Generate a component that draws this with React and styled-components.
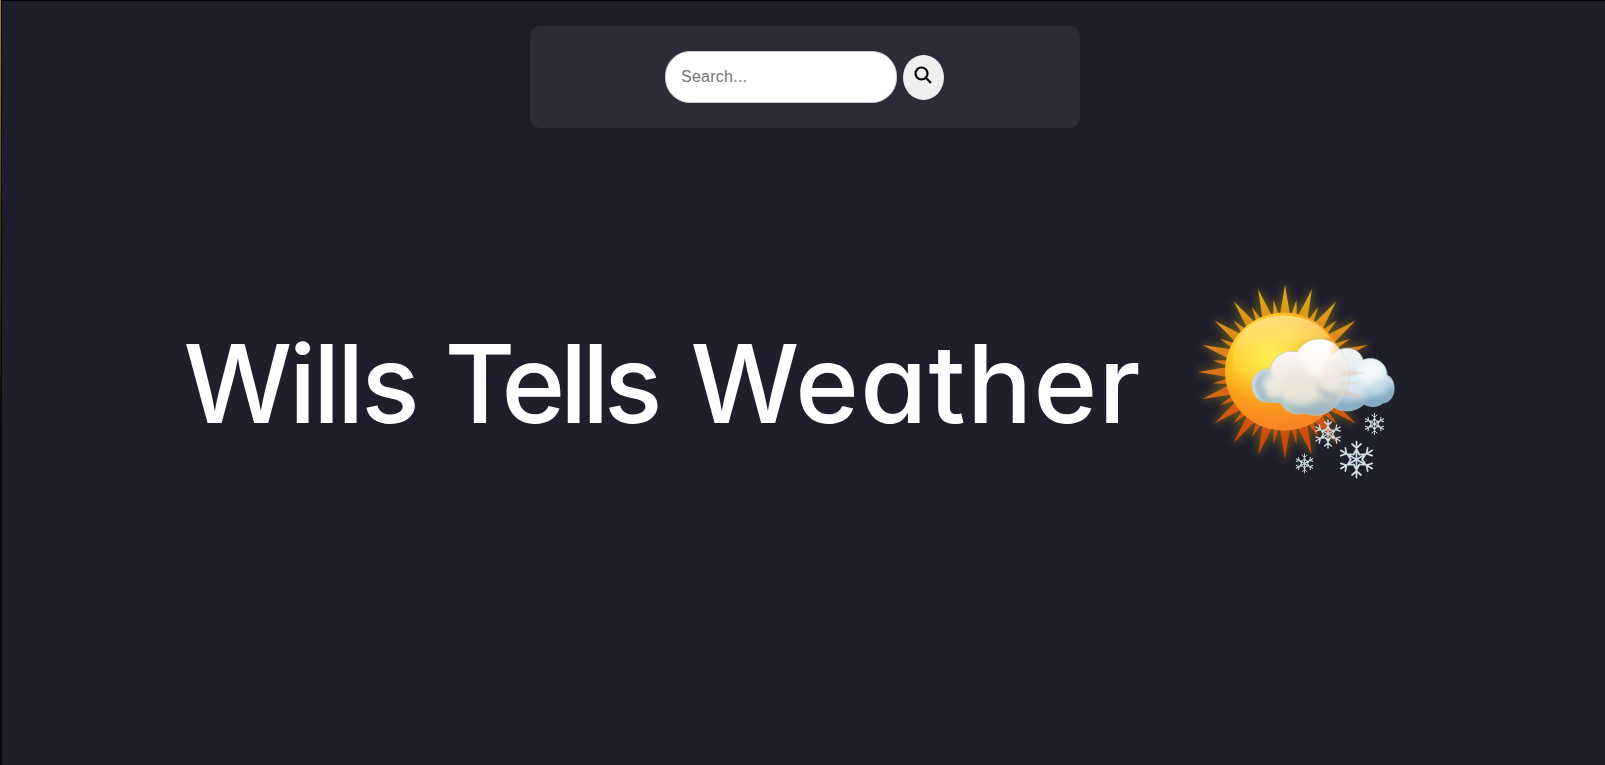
import React from 'react';
import styled, { createGlobalStyle } from 'styled-components';

const GlobalStyle = createGlobalStyle`
  * { box-sizing: border-box; }
  body { margin: 0; background: #1f1e2d; overflow: hidden; }
`;

const Page = styled.div`
  height: 765px;
  display: flex;
  flex-direction: column;
  align-items: center;
  padding-top: 25px;
  background: #1f1e2d;
  border-left: 2px solid #08070d;
  border-top: 1px solid #08070d;
  position: relative;
`;

const EdgeGlow = styled.div`
  position: absolute;
  left: -2px;
  top: -1px;
  width: 1px;
  height: 430px;
  background: linear-gradient(#a08800, #806c00 25%, #4a3d06 50%, #08070d);
`;

const SearchBar = styled.form`
  width: 550px;
  height: 102px;
  margin-left: 3px;
  display: flex;
  align-items: center;
  justify-content: center;
  gap: 6px;
  padding-right: 1px;
  background: #2c2b3a;
  border-radius: 10px;
  box-shadow: 0 0 10px rgba(0, 0, 0, 0.1);
`;

const SearchInput = styled.input`
  width: 232px;
  height: 52px;
  padding: 0 15px;
  border: 1px solid #ccc;
  border-radius: 25px;
  background: #fff;
  font: 16px "Liberation Sans", sans-serif;
  letter-spacing: 0.25px;
  outline: none;
  &::placeholder { color: #757575; }
`;

const SearchButton = styled.button`
  width: 41px;
  height: 45px;
  padding: 0 1px 4px 0;
  border: 0;
  border-radius: 50%;
  background: #efefef;
  display: flex;
  align-items: center;
  justify-content: center;
`;

const Hero = styled.main`
  width: 1220px;
  display: flex;
  align-items: flex-start;
  justify-content: space-between;
  margin: 146px 18px 0 0;
`;

const Title = styled.h1`
  margin: 40px 0 0 -1px;
  display: flex;
  color: #fff;
  font: 500 108.5px/140px Inter, sans-serif;
  font-feature-settings: "cv11" 1;
`;

const Word = styled.span`
  flex: none;
  width: ${p => p.$width}px;
  letter-spacing: ${p => p.$spacing}px;
  white-space: pre;
`;

const Picture = styled.svg`
  flex: none;
  display: block;
`;

const rays = Array.from({ length: 40 }, (_, i) => ({ angle: i * 9, long: i % 2 === 0 }));

function Ray({ angle, long }) {
  const a = (angle * Math.PI) / 180;
  const w = long ? 0.1 : 0.06;
  const tip = long ? 87 : 73;
  const pt = (r, t) => `${95 + r * Math.sin(t)},${98 - r * Math.cos(t)}`;
  return <polygon points={`${pt(55, a - w)} ${pt(tip, a)} ${pt(55, a + w)}`} />;
}

function Snowflake({ x, y, size }) {
  return (
    <g transform={`translate(${x} ${y}) scale(${size / 18})`} stroke="url(#snow)" strokeWidth="1.7" fill="none" strokeLinecap="round">
      {[0, 60, 120, 180, 240, 300].map(r => (
        <path key={r} transform={`rotate(${r})`} d="M0.01 0V-18M-4.500 -15.500L0-11.500L4.500-15.500M-2.900-5L0-10.500L2.900-5" />
      ))}
    </g>
  );
}

const FRONT = 'M80 128C68 129 62 121 62 111C62 101 70 94 80 95C83 82 95 75 107 78C112 69 120 65 130 65C142 65 151 73 154 83C164 91 160 121 146 131C140 140 125 144 115 139C104 142 94 137 91 129C88 128 85 129 80 128Z';
const BACK = 'M149 76C160 71 171 77 173 86C185 81 197 89 197 101C208 106 206 128 193 129C187 134 179 133 174 130C165 139 152 138 145 134C130 120 132 85 149 76Z';

function WeatherPicture() {
  return (
    <Picture width="215" height="215" viewBox="0 0 215 215" aria-label="Sun, cloud and snow">
      <defs>
        <linearGradient id="ray" gradientUnits="userSpaceOnUse" x1="0" y1="11" x2="0" y2="186">
          <stop stopColor="#d9ac1c" /><stop offset=".45" stopColor="#d9781b" /><stop offset="1" stopColor="#c93d08" />
        </linearGradient>
        <radialGradient id="sun" gradientUnits="userSpaceOnUse" cx="79" cy="81" r="78">
          <stop stopColor="#ffee4a" /><stop offset=".4" stopColor="#ffcf2e" /><stop offset=".7" stopColor="#f8a817" /><stop offset="1" stopColor="#f4881d" />
        </radialGradient>
        <linearGradient id="shine" x1="0" y1="0" x2="0" y2="1">
          <stop stopColor="#ffe9a0" stopOpacity=".6" /><stop offset="1" stopColor="#ffe94a" stopOpacity=".05" />
        </linearGradient>
        <linearGradient id="lower" x1="0" y1="0" x2="0" y2="1">
          <stop offset=".5" stopColor="#f8861d" stopOpacity="0" /><stop offset="1" stopColor="#fb8128" stopOpacity=".75" />
        </linearGradient>
        <linearGradient id="back" gradientUnits="userSpaceOnUse" x1="165" y1="75" x2="178" y2="136">
          <stop stopColor="#f5f5f3" /><stop offset=".45" stopColor="#d9e7ee" /><stop offset="1" stopColor="#8fb4ca" />
        </linearGradient>
        <linearGradient id="front" gradientUnits="userSpaceOnUse" x1="115" y1="68" x2="118" y2="141">
          <stop stopColor="#fffefa" /><stop offset=".4" stopColor="#f4ebe4" /><stop offset=".72" stopColor="#e4e2d4" /><stop offset="1" stopColor="#9fbbc5" />
        </linearGradient>
        <linearGradient id="fade" gradientUnits="userSpaceOnUse" x1="138" y1="0" x2="160" y2="0">
          <stop stopColor="#fff" /><stop offset="1" stopColor="#fff" stopOpacity=".3" />
        </linearGradient>
        <mask id="frontMask" maskUnits="userSpaceOnUse" x="55" y="55" width="120" height="95"><rect x="55" y="55" width="120" height="95" fill="url(#fade)" /></mask>
        <linearGradient id="snow" gradientUnits="userSpaceOnUse" x1="0" y1="-18" x2="0" y2="18">
          <stop stopColor="#dadde4" /><stop offset="1" stopColor="#b2def2" />
        </linearGradient>
        <filter id="glow" x="-20%" y="-20%" width="140%" height="140%"><feGaussianBlur stdDeviation="4" /></filter>
        <filter id="soft" x="-20%" y="-20%" width="140%" height="140%"><feGaussianBlur stdDeviation="2.5" /></filter>
        <filter id="edge"><feGaussianBlur stdDeviation=".7" /></filter>
        <clipPath id="frontClip"><path d={FRONT} /></clipPath>
        <clipPath id="backClip"><path d={BACK} /></clipPath>
      </defs>
      <g fill="#c3a000" stroke="#c3a000" strokeWidth="3" opacity=".4" filter="url(#glow)">
        {rays.map(r => <Ray key={r.angle} {...r} />)}
      </g>
      <g fill="url(#ray)">{rays.map(r => <Ray key={r.angle} {...r} />)}</g>
      <circle cx="94" cy="97.500" r="59" fill="url(#sun)" />
      <circle cx="94" cy="97.500" r="59" fill="url(#lower)" />
      <path d="M44 83C44 57 66 42 94 42C116 42 132 50 140 64C113 62 93 75 83 110C61 111 44 99 44 83Z" fill="url(#shine)" />
      <path d="M42 76C60 66 91 62 139 66C130 49 115 41 94 41C65 41 47 54 42 76Z" fill="#fff3b8" opacity=".12" />
      <path d={BACK} fill="url(#back)" stroke="#a9c4d1" strokeWidth=".8" filter="url(#edge)" />
      <g clipPath="url(#backClip)">
        <g filter="url(#soft)">
          <path d="M144 125Q160 132 180 124Q190 122 190 112Q199 118 205 110V136H144Z" fill="#719fba" opacity=".6" />
          <circle cx="181" cy="99" r="13" fill="#fff" opacity=".65" />
          <circle cx="166" cy="112" r="11" fill="#e8f1f5" opacity=".55" />
          <circle cx="189" cy="113" r="8" fill="#c7deea" opacity=".8" />
        </g>
        <path d="M150 96L178 99L150 103ZM150 107L168 109L150 112ZM150 114L178 125L148 120Z" fill="#eeb790" opacity=".35" />
      </g>
      <g mask="url(#frontMask)">
        <path d={FRONT} fill="url(#front)" stroke="#c7cec3" strokeWidth=".9" filter="url(#edge)" />
        <g clipPath="url(#frontClip)">
          <g filter="url(#soft)">
            <path d="M80 95Q65 96 64 111Q66 127 83 128Q72 119 76 108Q79 104 86 106Q79 101 80 95Z" fill="#8fb5cb" opacity=".8" />
            <path d="M64 119Q75 127 92 122L96 133Q75 137 64 119Z" fill="#8db1c2" opacity=".5" />
            <circle cx="82" cy="108" r="10" fill="#f1eee6" opacity=".55" />
            <circle cx="130" cy="84" r="18" fill="#fff" opacity=".65" />
            <circle cx="109" cy="114" r="18" fill="#ebe6d7" opacity=".6" />
            <path d="M126 104Q128 120 148 118Q151 124 149 125Q126 130 126 104Z" fill="#9baebb" opacity=".65" />
            <path d="M95 125Q112 137 132 126Q140 130 149 125Q145 140 115 143Q101 141 95 125Z" fill="#8caabb" opacity=".5" />
            <ellipse cx="145" cy="99" rx="13" ry="14" fill="#f5e6dc" opacity=".65" />
          </g>
        </g>
      </g>
      <Snowflake x={138} y={160} size={14} />
      <Snowflake x={184.500} y={150} size={10.500} />
      <Snowflake x={114.500} y={189.500} size={9.500} />
      <Snowflake x={166.500} y={185.500} size={18} />
    </Picture>
  );
}

export default function App() {
  return (
    <>
      <GlobalStyle />
      <Page>
        <EdgeGlow />
        <SearchBar onSubmit={e => e.preventDefault()}>
          <SearchInput placeholder="Search..." aria-label="Search" />
          <SearchButton aria-label="Search">
            <svg width="18" height="18" viewBox="0 0 18 18" fill="none" stroke="#000" strokeWidth="2.200">
              <circle cx="7.500" cy="7.500" r="6" /><path d="M11.800 11.800L17 17" />
            </svg>
          </SearchButton>
        </SearchBar>
        <Hero>
          <Title>
            <Word $width={261} $spacing={-3.3}>Wills </Word>
            <Word $width={246} $spacing={-5.3}>Tells </Word>
            <Word $width={450} $spacing={1.3}>Weather</Word>
          </Title>
          <WeatherPicture />
        </Hero>
      </Page>
    </>
  );
}
